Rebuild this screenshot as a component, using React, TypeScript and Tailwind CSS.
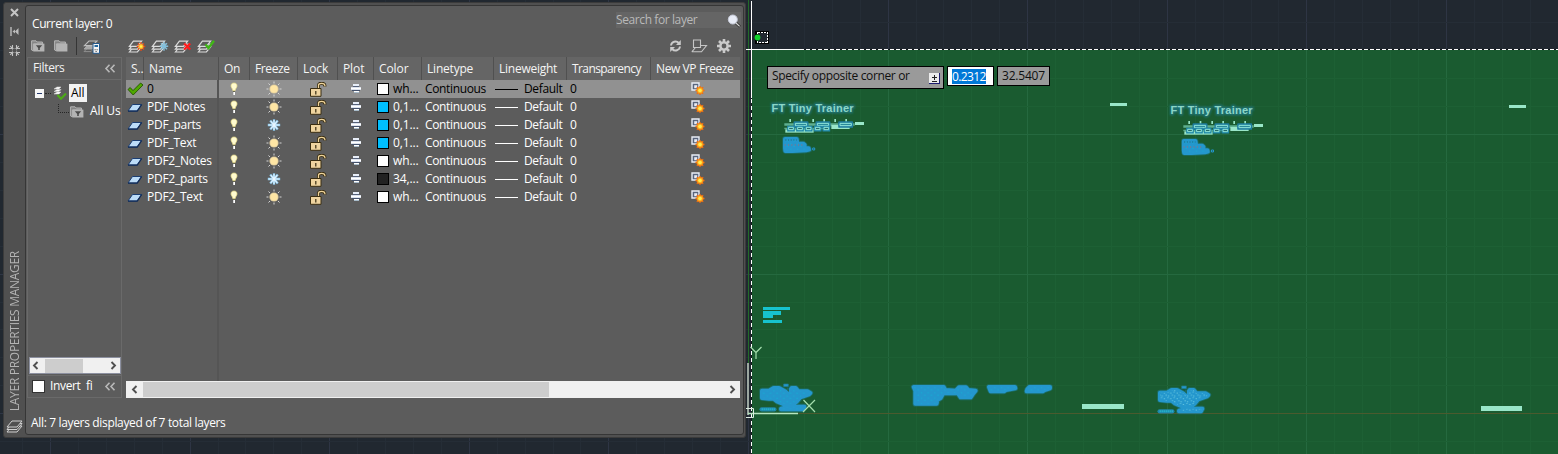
import React from "react";

type Layer = { name: string; frozen?: boolean; current?: boolean; swatch: string; color: string };

const LAYERS: Layer[] = [
  { name: "0", current: true, swatch: "#ffffff", color: "wh..." },
  { name: "PDF_Notes", swatch: "#00bfff", color: "0,1..." },
  { name: "PDF_parts", frozen: true, swatch: "#00bfff", color: "0,1..." },
  { name: "PDF_Text", swatch: "#00bfff", color: "0,1..." },
  { name: "PDF2_Notes", swatch: "#ffffff", color: "wh..." },
  { name: "PDF2_parts", frozen: true, swatch: "#222222", color: "34,..." },
  { name: "PDF2_Text", swatch: "#ffffff", color: "wh..." },
];

/* ---------- icons ---------- */

const Check = () => (
  <svg width="17" height="14" viewBox="0 0 17 14">
    <path d="M1 7.5 3.2 5.5 6 8.6 13.6 1 16 3 6.2 13Z" fill="#4fa800" stroke="#245400" strokeWidth="0.9" />
  </svg>
);

const Sheet = () => (
  <svg width="16" height="9" viewBox="0 0 16 9">
    <path d="M1 8 5.5 1.5H14.5L10 8Z" fill="#bcdcf8" stroke="#1c3e72" strokeWidth="1" />
    <path d="M1 8.2H10.3L14.8 1.5" fill="none" stroke="#122c58" strokeWidth="1.2" />
  </svg>
);

const Bulb = () => (
  <svg width="8" height="14" viewBox="0 0 8 14">
    <path d="M4 1C6 1 7 2.2 7 4 7 5.6 5.4 6.4 5.3 8.4H2.7C2.6 6.4 1 5.6 1 4 1 2.2 2 1 4 1Z" fill="#fffbd0" stroke="#eee08a" strokeWidth="0.7" />
    <path d="M3 9h2v1H3z" fill="#6a6a50" />
    <path d="M3 10h2v3H3z" fill="#d8d8d8" />
    <path d="M4 10h1v3H4z" fill="#ffffff" />
  </svg>
);

const Sun = () => (
  <svg width="16" height="16" viewBox="0 0 16 16">
    <circle cx="8" cy="8" r="4.6" fill="#d9c79c" />
    <circle cx="8" cy="8" r="3.7" fill="#ffe6a4" />
    <path d="M8 .5v2M8 13.5v2M.5 8h2M13.5 8h2M2.5 2.5l1.5 1.5M12 12l1.5 1.5M13.5 2.5 12 4M4 12l-1.5 1.5" stroke="#d5d5d5" strokeWidth="1" />
  </svg>
);

const Snow = () => (
  <svg width="14" height="14" viewBox="0 0 14 14">
    <path d="M7 1.2v11.6M.8 7h12.4M3.2 2.6l7.6 8.8M10.8 2.6l-7.6 8.8" stroke="#8cc8ec" strokeWidth="2.3" />
    <path d="M7 2v10M1.5 7h11M3.7 3.2l6.6 7.6M10.3 3.2l-6.6 7.6" stroke="#e8f6ff" strokeWidth="1.1" />
  </svg>
);

const Lock = () => (
  <svg width="17" height="15" viewBox="0 0 17 15">
    <path d="M8.5 6V3.4C8.5 2 9.6 1.2 11.5 1.2S15 2 15 4.6" fill="none" stroke="#3a2e12" strokeWidth="3" />
    <path d="M8.5 6V3.4C8.5 2 9.6 1.4 11.5 1.4S15 2 15 4.2" fill="none" stroke="#efd49a" strokeWidth="1.3" />
    <path d="M.5 6.5h10.5v7.8H.5z" fill="#efd49f" stroke="#3a2e12" />
    <path d="M5.2 9h1.2v3.4H5.2z" fill="#3a2e12" />
  </svg>
);

const Printer = () => (
  <svg width="10" height="11" viewBox="0 0 10 11" shapeRendering="crispEdges">
    <path d="M2 1h6v2H2z" fill="#e8eef8" />
    <path d="M2 3h6v1H2z" fill="#55617a" />
    <path d="M0 4h10v3H0z" fill="#dde3ee" />
    <path d="M0 5h10v1H0z" fill="#ffffff" />
    <path d="M1 7h8v1H1z" fill="#44526c" />
    <path d="M3 8h5v1H3z" fill="#ffffff" />
    <path d="M3 9h5v1H3z" fill="#a9bccb" />
  </svg>
);

const VpSun = () => (
  <svg width="14" height="14" viewBox="0 0 14 14">
    <path d="M1 1h7v7H1z" fill="#59657c" stroke="#e9edf5" strokeWidth="1.4" />
    <path d="M3.2 3.2h3v3h-3z" fill="#e9edf5" />
    <path d="M9 4v9M4.5 8.5h9M5.8 5.3l6.4 6.4M12.2 5.3l-6.4 6.4" stroke="#f06a10" strokeWidth="1.3" />
    <circle cx="9" cy="8.5" r="3.2" fill="#ffb020" stroke="#f47a10" strokeWidth="0.8" />
    <circle cx="9" cy="8.5" r="1.8" fill="#ffee50" />
  </svg>
);

const Folder = ({ funnel }: { funnel?: boolean }) => (
  <svg width="14" height="12" viewBox="0 0 14 12">
    <path d="M.6 10V.8H5L6.2 2H11.4V4H2.4V10.8Z" fill="#858585" stroke="#bdbdbd" strokeWidth="0.9" />
    <path d="M2.4 3.6h11v7.9h-11z" fill="#b4b4b4" />
    {funnel && <path d="M4.8 5.3h6.4L8.8 8v2H7.2V8Z" fill="#4c4c4c" />}
  </svg>
);

const Chevrons = () => (
  <svg width="12" height="9" viewBox="0 0 12 9">
    <path d="M5.5.7 2 4.5 5.5 8.3M10.5.7 7 4.5 10.5 8.3" fill="none" stroke="#b8b8b8" strokeWidth="1.6" />
  </svg>
);

const Stack = ({ mark }: { mark: "new" | "frozen" | "delete" | "current" | "states" }) => (
  <svg width="18" height="15" viewBox="0 0 18 15">
    {mark === "states" ? (
      <g>
        <path d="M1 12.6 5 8.6H12L8 12.6Z" fill="#5c5c5c" stroke="#8f8f8f" />
        <path d="M1 10 5 6H13L9 10Z" fill="#a8a8a8" stroke="#a8a8a8" />
        <path d="M1.4 6.6 6 2H14L9.4 6.6Z" fill="#5c5c5c" stroke="#bdbdbd" strokeWidth="1.1" />
      </g>
    ) : (
      [9.6, 6.8, 4].map((y) => (
        <path key={y} d={`M1.4 ${y + 3.4}L5.4 ${y - 1.8}H13.6L9.4 ${y + 3.4}Z`} fill="#5c5c5c" stroke="#dcdcdc" strokeWidth="1.2" />
      ))
    )}
    {mark === "new" && (
      <g>
        <path d="M13 3v9M8.7 7.5h8.6M10 4.5l6 6M16 4.5l-6 6" stroke="#e84a17" strokeWidth="1.3" />
        <circle cx="13" cy="7.5" r="2.5" fill="#ffb52a" />
        <circle cx="13" cy="7.5" r="1.2" fill="#fff450" />
      </g>
    )}
    {mark === "frozen" && <path d="M13 2.8v9M8.8 7.3h8.4M10 4.3l6 6M16 4.3l-6 6" stroke="#82bfdb" strokeWidth="1.4" />}
    {mark === "delete" && <path d="M10.2 4.5l6 6M16.2 4.5l-6 6" stroke="#ff1c1c" strokeWidth="2.4" />}
    {mark === "current" && <path d="M8.5 5.5l3 3.5L17 1.7" fill="none" stroke="#3fb816" strokeWidth="2.4" />}
    {mark === "states" && (
      <g>
        <path d="M10 4.5h6.5v9.8H10z" fill="#f4f4f4" stroke="#25588a" />
        <path d="M11.5 6h3.5v2h-3.5z" fill="#2368a0" />
        <path d="M11.6 10.2h1v1h-1zM13.6 10.2h1v1h-1zM12.6 12h1v1h-1z" fill="#333" />
      </g>
    )}
  </svg>
);

const Arrow = ({ right, cls }: { right?: boolean; cls: string }) => (
  <svg className={cls} width="7" height="9" viewBox="0 0 7 9">
    <path d={right ? "M1.5 1 5 4.5 1.5 8" : "M5.5 1 2 4.5 5.5 8"} fill="none" stroke="#505050" strokeWidth="1.9" />
  </svg>
);

/* ---------- drawing area ---------- */

const VLINES = Array.from({ length: 57 }, (_, i) => ({ x: 50.5 + (i - 1) * 27.92, major: (i - 1) % 5 === 0 }));
const HLINES = Array.from({ length: 17 }, (_, i) => ({ y: 134.5 + (i - 4) * 27.92, major: (i - 4) % 5 === 0 }));

const Blob = ({ d, dots }: { d: string; dots: string }) => (
  <g strokeLinejoin="round" strokeLinecap="round">
    <path d={d} fill="#1e7c91" stroke="#1e7c91" strokeWidth="17" opacity="0.55" />
    <path d={d} fill="#2497cd" stroke="#2497cd" strokeWidth="12" />
    <path d={d} fill={dots} stroke="none" />
  </g>
);

const PlanCloud = ({ x, y, dots }: { x: number; y: number; dots: string }) => (
  <g transform={`translate(${x} ${y}) scale(.3333)`}>
    <Blob
      dots={dots}
      d="M9 20H30L44 12H60L78 22 88 28 98 12H110L118 22H145L154 27 150 31 124 40 114 52 104 60H72L54 52 44 44H30L9 42Z M66 74 88 68H136L132 76H66Z"
    />
    <path d="M8 76H46" stroke="#1f86a8" strokeWidth="13" strokeLinecap="round" />
    <path d="M8 76H50" stroke="#27c3d4" strokeWidth="6" strokeDasharray="3 3" />
    <path d="M74 0h14v8H74z" fill="#2497cd" stroke="#1e7c91" strokeWidth="2" />
    <path d="M83 10l7 2v12l-6-5z" fill="#1d6a5f" />
  </g>
);

const Elevation = ({ x, y }: { x: number; y: number }) => (
  <g transform={`translate(${x} ${y}) scale(.3333)`}>
    <path d="M7 13H218v7H7z" fill="#5faf8f" />
    <path d="M7 26H140v5H7z" fill="#5faf8f" />
    <path d="M10 31h85v10H10z" fill="#99e6c8" />
    <path d="M148 18h55v12h-55z" fill="#99e6c8" />
    {[22, 56, 91, 124, 157, 190].map((v) => (
      <path key={v} d={`M${v} 0h5v9h-5z`} fill="#99e6c8" />
    ))}
    {[40, 106, 174].map((v) => (
      <g key={v}>
        <path d={`M${v - 2} 10h38v13h-38z`} fill="none" stroke="#1e7c9c" strokeWidth="7" strokeLinejoin="round" />
        <path d={`M${v} 13h34v7h-34z`} fill="#2a8a9a" stroke="#93e8dc" strokeWidth="3" />
      </g>
    ))}
    {[20, 47, 73, 100, 126].map((v) => (
      <g key={v}>
        <path d={`M${v - 2} 23h18v12h-18z`} fill="none" stroke="#2088a8" strokeWidth="5" />
        <path d={`M${v} 25h14v7h-14z`} fill="#216b6b" stroke="#93e8dc" strokeWidth="3" />
      </g>
    ))}
    <path d="M219 9h27v9h-27z" fill="#99e6c8" />
  </g>
);

const Pile = ({ x, y }: { x: number; y: number }) => (
  <g transform={`translate(${x} ${y}) scale(.3333)`}>
    <Blob dots="url(#tealDots)" d="M7 6H42L44 20H62L66 24 64 34H78L79 38 70 40 30 42H8L7 34Z" />
    <path d="M6 24H62" stroke="#b0656c" strokeWidth="3" strokeDasharray="3 7" />
    <path d="M8 9H42" stroke="#186a77" strokeWidth="3" strokeDasharray="3 5" />
    <path d="M90 33h6v6h-6z" fill="none" stroke="#2497cd" strokeWidth="3" />
  </g>
);

const DrawingArea = () => (
  <svg className="absolute inset-0" width="1558" height="454" viewBox="0 0 1558 454">
    <defs>
      <pattern id="tealDots" width="20" height="16" patternUnits="userSpaceOnUse">
        <path d="M3 3h3v3H3zM13 10h3v3h-3z" fill="#13b0d4" />
      </pattern>
      <pattern id="paleDots" width="19" height="17" patternUnits="userSpaceOnUse">
        <path d="M2 3h3v3H2zM12 1h3v2h-3zM7 9h3v3H7zM14 12h3v3h-3z" fill="#7ad6e6" />
      </pattern>
      <filter id="glow" x="-10%" y="-60%" width="120%" height="220%">
        <feGaussianBlur stdDeviation="1.3" />
      </filter>
    </defs>
    <rect width="1558" height="454" fill="#212830" />
    <g shapeRendering="crispEdges">
      {VLINES.map((l) => (
        <rect key={l.x} x={Math.floor(l.x)} y="0" width="1" height="454" fill={l.major ? "#2e3544" : "#252d36"} />
      ))}
      {HLINES.map((l) => (
        <rect key={l.y} x="0" y={Math.floor(l.y)} width="1558" height="1" fill={l.major ? "#2e3544" : "#252d36"} />
      ))}
      <rect x="752" y="50" width="806" height="404" fill="#1a5b30" />
      {VLINES.filter((l) => l.x > 753).map((l) => (
        <rect key={l.x} x={Math.floor(l.x)} y="50" width="1" height="404" fill={l.major ? "#25693f" : "#1d6034"} />
      ))}
      {HLINES.filter((l) => l.y > 51).map((l) => (
        <rect key={l.y} x="752" y={Math.floor(l.y)} width="806" height="1" fill={l.major ? "#25693f" : "#1d6034"} />
      ))}
      <rect x="752" y="413" width="806" height="1" fill="#4b5a2e" />
      <rect x="748" y="0" width="1" height="363" fill="#226b28" />
      <rect x="747" y="363" width="2" height="52" fill="#9ca7a0" />
      <path d="M751.5 50V454" stroke="#14191d" strokeWidth="1" />
      <path d="M751.5 50V454" stroke="#ffffff" strokeWidth="1" strokeDasharray="4 3" />
      <path d="M746 49.5H1558" stroke="#14191d" />
      <path d="M800 49.5H1558" stroke="#ffffff" strokeDasharray="4 2" />
      <path d="M746 49.5H800M751.5 1V98" stroke="#ffffff" />
      <rect x="755" y="31" width="14" height="13" fill="#000000" />
      <rect x="757.5" y="32.5" width="10" height="10" fill="#212830" stroke="#ffffff" strokeDasharray="2 1" />
    </g>
    <circle cx="757.5" cy="37.5" r="2.9" fill="#12d32c" />

    <g fontFamily='"Liberation Sans", Arial, sans-serif' fontSize="11" fontWeight="bold">
      {[[771.5, 112], [1170.5, 114]].map(([x, y]) => (
        <g key={x}>
          <text x={x} y={y} textLength="82" stroke="#2283a5" strokeWidth="2.5" fill="#2283a5" filter="url(#glow)" opacity="0.6" aria-hidden="true">FT Tiny Trainer</text>
          <text x={x} y={y} textLength="82" fill="#8cd6c6">FT Tiny Trainer</text>
        </g>
      ))}
    </g>
    <Elevation x={782} y={119} />
    <Elevation x={1181} y={121} />
    <Pile x={782.7} y={137} />
    <Pile x={1181.5} y={139} />

    <g fill="#99e6c8" shapeRendering="crispEdges">
      <rect x="1110" y="103" width="17" height="3" />
      <rect x="1509" y="105" width="17" height="3" />
      <rect x="1082" y="404" width="42" height="5" />
      <rect x="1481" y="406" width="41" height="5" />
    </g>
    <path d="M763 307h27v3h-27zM763 311h18v4h-8v3h-10zM763 320h19v3h-19z" fill="#17c3ce" shapeRendering="crispEdges" />

    <PlanCloud x={759} y={384} dots="url(#tealDots)" />
    <PlanCloud x={1157} y={386} dots="url(#paleDots)" />
    <g transform="translate(740 290) scale(.3333)">
      <Blob dots="url(#tealDots)" d="M521 291H611L616 300 648 302 657 292H678L685 300 707 302 700 310 692 322 662 322 654 310H610L602 324 592 330 590 341 526 341 526 302Z" />
      <Blob dots="url(#tealDots)" d="M747 291H825L826 295 798 300 792 304 752 304Z" />
      <Blob dots="url(#tealDots)" d="M868 291H930L930 295 914 300 908 304 860 304 862 298Z" />
    </g>

    <path d="M748 413.5H798" stroke="#b6e6bf" strokeWidth="1.3" />
    <path d="M746 408.5H753.5V417.5H746" fill="none" stroke="#dcebe0" />
    <path d="M750.5 347l5.5 5.5v6.5M761.5 347l-5.5 5.5M803.5 400l11.5 12M815 400l-12 12" fill="none" stroke="#a5dfae" strokeWidth="1.2" />
  </svg>
);

/* ---------- palette ---------- */

const HEADERS: { label: string; cls: string }[] = [
  { label: "S..", cls: "w-[18px] pl-[5px]" },
  { label: "Name", cls: "w-[75px] pl-[5px]" },
  { label: "On", cls: "w-[31px] pl-[5px] tracking-[-0.4px]" },
  { label: "Freeze", cls: "w-[48px] pl-[5px] tracking-[-0.4px]" },
  { label: "Lock", cls: "w-[40px] pl-[5px]" },
  { label: "Plot", cls: "w-[36px] pl-[5px]" },
  { label: "Color", cls: "w-[48px] pl-[5px]" },
  { label: "Linetype", cls: "w-[72px] pl-[5px] tracking-[-0.2px]" },
  { label: "Lineweight", cls: "w-[73px] pl-[5px] tracking-[-0.25px]" },
  { label: "Transparency", cls: "w-[84px] pl-[5px] tracking-[-0.6px]" },
  { label: "New VP Freeze", cls: "w-[89px] pl-[5px] tracking-[-0.4px]" },
];

const Row = ({ layer }: { layer: Layer }) => (
  <div className={`flex h-[18px] items-center ${layer.current ? "bg-[#919191] text-black" : "text-white"}`}>
    <div className="flex w-[18px] shrink-0 justify-center">{layer.current ? <Check /> : <Sheet />}</div>
    <div className="w-[74px] shrink-0 pl-[3px] tracking-[-0.25px]">{layer.name}</div>
    <div className="flex w-[31px] shrink-0 justify-center">
      <Bulb />
    </div>
    <div className="flex w-[49px] shrink-0 justify-center">{layer.frozen ? <Snow /> : <Sun />}</div>
    <div className="flex w-[40px] shrink-0 justify-center">
      <Lock />
    </div>
    <div className="flex w-[35px] shrink-0 justify-center pb-[2px]">
      <Printer />
    </div>
    <div className="flex w-[48px] shrink-0 items-center pl-[4px]">
      <span className="mr-[4px] h-[12px] w-[12px] shrink-0 border border-black" style={{ backgroundColor: layer.swatch }} />
      {layer.color}
    </div>
    <div className="w-[72px] shrink-0 pl-[4px] tracking-[-0.35px]">Continuous</div>
    <div className="flex w-[73px] shrink-0 items-center pl-[2px] tracking-[-0.35px]">
      <span className={`mr-[6px] h-px w-[23px] shrink-0 ${layer.current ? "bg-black" : "bg-white"}`} />
      Default
    </div>
    <div className="w-[84px] shrink-0 pl-[4px]">0</div>
    <div className="flex w-[90px] shrink-0 pl-[41px]">
      <VpSun />
    </div>
  </div>
);

const TitleStrip = () => (
  <div className="flex w-[21px] shrink-0 flex-col items-center pt-[5px]">
    <svg width="9" height="9" viewBox="0 0 9 9">
      <path d="M1 1l7 7M8 1l-7 7" stroke="#c6c6c6" strokeWidth="2" />
    </svg>
    <svg className="mt-[10px]" width="9" height="9" viewBox="0 0 9 9">
      <path d="M1 0v9" stroke="#bdbdbd" strokeWidth="1.4" />
      <path d="M2.5 4.5 5 2.5v4ZM5 4.5 8.5 1v7Z" fill="#bdbdbd" />
    </svg>
    <svg className="mt-[9px]" width="11" height="11" viewBox="0 0 11 11">
      <path d="M3.5 0v11M7.5 0v11M0 3.5h11M0 7.5h11M1.2 1.2l8.6 8.6M9.8 1.2 1.2 9.8" stroke="#c2c2c2" strokeWidth="1.1" />
      <circle cx="5.5" cy="5.5" r="2.2" fill="#505050" />
    </svg>
    <div className="mt-auto mb-[9px] rotate-180 whitespace-nowrap text-[12px] leading-[16px] tracking-[-0.29px] text-[#b4b4b4] [writing-mode:vertical-rl]">
      LAYER PROPERTIES MANAGER
    </div>
    <svg className="mb-[3px]" width="17" height="14" viewBox="0 0 17 14">
      {[8.5, 6, 3.5].map((y) => (
        <path key={y} d={`M1 ${y + 3.5}L6 ${y - 2.5}H16L11 ${y + 3.5}Z`} fill="#505050" stroke="#d0d0d0" strokeWidth="1" />
      ))}
    </svg>
  </div>
);

const Filters = () => (
  <div className="flex w-[95px] shrink-0 flex-col">
    <div className="flex h-[319px] flex-col border border-[#6a6a6a]">
      <div className="flex h-[22px] shrink-0 items-center justify-between border-b border-[#6a6a6a] pr-[5px] pb-px pl-[5px]">
        <span className="tracking-[-0.35px] text-[#f2f2f2]">Filters</span>
        <Chevrons />
      </div>
      <div className="flex h-[24px] shrink-0 items-center pt-[2px] pl-[7px]">
        <svg className="mt-px" width="9" height="9" viewBox="0 0 9 9" shapeRendering="crispEdges">
          <path d="M0 0h9v9H0z" fill="#f6f6f6" />
          <path d="M2 4h5v1H2z" fill="#25396e" />
        </svg>
        <span className="mt-px ml-px w-[6px] border-t border-dotted border-[#262626]" />
        <svg className="ml-[2px]" width="14" height="14" viewBox="0 0 14 14">
          <path d="M1 3 4 1h4L6 3ZM1 5.5l3-2h4l-2 2ZM1 8l3-2h4l-2 2Z" fill="#ffffff" stroke="#cccccc" strokeWidth="0.6" />
          <path d="M4.5 9l3.5 3.7L13 7.5" fill="none" stroke="#4cab17" strokeWidth="2.2" />
        </svg>
        <span className="ml-[2px] h-[18px] w-[18px] bg-[#f2f2f2] pl-[2px] leading-[17px] text-black">All</span>
      </div>
      <div className="flex h-[18px] shrink-0 items-start overflow-hidden pl-[30px]">
        <span className="h-[9px] w-[11px] shrink-0 border-b border-l border-dotted border-[#262626]" />
        <span className="mt-[2px] ml-px shrink-0">
          <Folder funnel />
        </span>
        <span className="ml-[6px] whitespace-nowrap leading-[14px] text-white">All Us</span>
      </div>
      <div className="mt-auto mb-px ml-px flex h-[17px] w-[92px] shrink-0 items-center border border-[#8c90a0] bg-[#f0f0f0] pl-[2px]">
        <Arrow cls="shrink-0" />
        <span className="ml-[6px] h-[14px] w-[38px] bg-[#cdcdcd]" />
        <Arrow right cls="mr-[3px] ml-auto shrink-0" />
      </div>
    </div>
    <div className="flex h-[22px] items-center border border-t-0 border-[#6a6a6a] pr-[5px] pb-px pl-[4px]">
      <span className="mr-[5px] h-[13px] w-[13px] border border-[#333333] bg-white" />
      <span className="tracking-[-0.35px] text-white">Invert&nbsp; fi</span>
      <span className="ml-auto">
        <Chevrons />
      </span>
    </div>
  </div>
);

const TableGrid = () => (
  <div className="ml-[4px] flex w-[614px] shrink-0 flex-col">
    <div className="flex h-[23px] shrink-0 items-center bg-[#656565] text-[#f4f4f4]">
      {HEADERS.map((h) => (
        <div key={h.label} className={`flex h-full shrink-0 items-center border-r border-[#505050] pt-px whitespace-nowrap last:border-r-0 ${h.cls}`}>
          {h.label}
        </div>
      ))}
    </div>
    <div className="relative h-[301px]">
      {LAYERS.map((l) => (
        <Row key={l.name} layer={l} />
      ))}
      <span className="absolute top-0 left-[91px] h-[301px] w-[2px] bg-[#555555]" />
    </div>
    <div className="flex h-[17px] items-center bg-[#f0f0f0] pl-[5px]">
      <Arrow cls="shrink-0" />
      <span className="ml-[5px] h-[15px] w-[406px] bg-[#cdcdcd]" />
      <Arrow right cls="mr-[4px] ml-auto shrink-0" />
    </div>
  </div>
);

const Palette = () => (
  <div className="relative mt-[2px] ml-[3px] flex h-[436px] w-[743px] rounded-[3px] border border-[#3b3b3b] bg-[#505050]">
    <TitleStrip />
    <div className="mt-[2px] mb-[2px] flex w-[719px] flex-col rounded-[3px] border border-[#363636] bg-[#5c5c5c]">
      <div className="flex h-[30px] shrink-0 justify-between pl-[6px]">
        <span className="mt-[10px] tracking-[-0.4px] text-white">Current layer: 0</span>
        <div className="mt-[6px] mr-[2px] flex h-[16px] w-[125px] items-center justify-between bg-[#656565]">
          <span className="tracking-[-0.4px] text-[#b9b9b9]">Search for layer</span>
          <svg className="mt-px" width="14" height="14" viewBox="0 0 14 14">
            <path d="M9 9l4 3.8" stroke="#303030" strokeWidth="2.8" />
            <path d="M9 9l3.6 3.4" stroke="#d8d8d8" strokeWidth="1.2" />
            <circle cx="5.8" cy="5.5" r="4.5" fill="#e8ecf6" stroke="#c6cad8" />
          </svg>
        </div>
      </div>
      <div className="mb-px flex h-[20px] shrink-0 items-center pl-[5px]">
        <Folder funnel />
        <span className="ml-[9px]">
          <Folder />
        </span>
        <span className="ml-[8px] h-[18px] w-px bg-[#353535]" />
        <span className="ml-[6px]">
          <Stack mark="states" />
        </span>
        <div className="ml-[27px] flex gap-[5px]">
          <Stack mark="new" />
          <Stack mark="frozen" />
          <Stack mark="delete" />
          <Stack mark="current" />
        </div>
        <div className="mr-[12px] ml-auto flex items-center gap-[9px]">
          <svg width="13" height="12" viewBox="0 0 13 12">
            <path d="M2 5.5A4.5 4.5 0 0 1 9.8 3M11 6.5A4.5 4.5 0 0 1 3.2 9" fill="none" stroke="#cbcbcb" strokeWidth="1.9" />
            <path d="M11.8 0v5H7ZM1.2 12V7H6Z" fill="#cbcbcb" />
          </svg>
          <svg width="17" height="14" viewBox="0 0 17 14">
            <path d="M2.5 1h7v7.5h-7zM.8 12.8 4.5 8.5M9.5 6.5H15.5L10.5 12.8H.8" fill="none" stroke="#c6c6c6" strokeWidth="1.1" />
          </svg>
          <svg width="14" height="14" viewBox="0 0 14 14">
            <path d="M7 0v14M0 7h14M2 2l10 10M12 2 2 12" stroke="#cacaca" strokeWidth="2.6" />
            <circle cx="7" cy="7" r="3.6" fill="#5c5c5c" stroke="#cacaca" strokeWidth="2.4" />
          </svg>
        </div>
      </div>
      <div className="flex pl-[1px]">
        <Filters />
        <TableGrid />
      </div>
      <div className="mt-[17px] pl-[5px] tracking-[-0.34px] text-white">All: 7 layers displayed of 7 total layers</div>
    </div>
  </div>
);

const DynamicInput = () => (
  <div className="absolute top-[66px] left-[767px] flex items-start gap-[3px] text-[12px] leading-[16px] text-[#101010]">
    <div className="flex h-[23px] w-[177px] items-center border border-black bg-[#9a9a9a] pr-[3px] pl-[4px] whitespace-nowrap">
      <span className="pb-[3px] tracking-[-0.35px]">Specify opposite corner or</span>
      <svg className="mt-[2px] ml-auto" width="11" height="11" viewBox="0 0 11 11" shapeRendering="crispEdges">
        <path d="M0 0h11v11H0z" fill="#1d1d70" />
        <path d="M0 0h10v10H0z" fill="#ececec" />
        <path d="M5 2h1v5H5zM3 4h5v1H3zM3 8h5v1H3z" fill="#222222" />
      </svg>
    </div>
    <div className="flex h-[20px] w-[47px] items-center border border-black bg-white pl-[4px]">
      <span className="bg-[#0078d7] leading-[15px] tracking-[-0.6px] text-white">0.2312</span>
    </div>
    <div className="flex h-[20px] w-[53px] items-center border border-black bg-[#9a9a9a] pl-[4px] tracking-[-0.2px]">32.5407</div>
  </div>
);

export default function App() {
  return (
    <div className="relative h-[454px] w-[1558px] overflow-hidden bg-[#212830] font-['Open_Sans','Noto_Sans',sans-serif] text-[12px] leading-[16px] tracking-[-0.1px]">
      <DrawingArea />
      <div className="flex">
        <Palette />
      </div>
      <DynamicInput />
    </div>
  );
}
